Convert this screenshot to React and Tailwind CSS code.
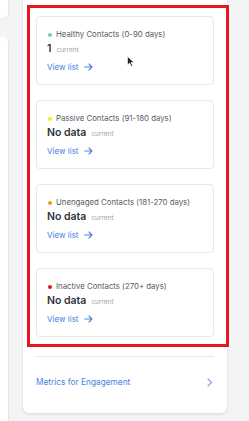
import React from 'react';

const groups = [
  { label: 'Healthy Contacts (0-90 days)', value: '1', dot: 'bg-[#6fd0a8]' },
  { label: 'Passive Contacts (91-180 days)', value: 'No data', dot: 'bg-[#f2ef14]' },
  { label: 'Unengaged Contacts (181-270 days)', value: 'No data', dot: 'bg-[#f5971c]' },
  { label: 'Inactive Contacts (270+ days)', value: 'No data', dot: 'bg-[#e3151f]' },
];

const ContactCard = ({ label, value, dot }) => (
  <div className="h-[69px] rounded-[4px] border border-[#e6e8ec] bg-white pl-[10px] pt-[13px]">
    <div className="flex items-center h-[9px]">
      <span className={`w-[4px] h-[4px] rounded-full ${dot} ml-[1px]`} />
      <span className="ml-[4px] text-[7.8px] text-[#555c68] whitespace-nowrap">{label}</span>
    </div>
    <div className="flex items-baseline mt-[2px] h-[14px]">
      <span className="text-[10.5px] font-semibold text-[#30343b]">{value}</span>
      <span className="ml-[5px] text-[6.5px] text-[#9aa0a8]">current</span>
    </div>
    <div className="flex items-center mt-[6px] text-[8px] text-[#4a82e0]">
      <span>View list</span>
      <svg className="ml-[5px]" width="9" height="8" viewBox="0 0 9 8" fill="none" stroke="currentColor" strokeWidth="1.1" strokeLinecap="round" strokeLinejoin="round">
        <path d="M0.8 4h7.2M5 1l3 3-3 3" />
      </svg>
    </div>
  </div>
);

export default function App() {
  return (
    <div className="relative w-[249px] h-[421px] overflow-hidden bg-[#f3f4f6]" style={{ fontFamily: 'Inter, "Noto Sans", sans-serif' }}>
      <div className="flex h-full">
        <div className="w-[8px] flex flex-col">
          <div className="h-[17px] bg-white rounded-br-[4px] shadow-[1px_0_1px_rgba(0,0,0,0.06)]" />
          <div className="mt-[20px] flex-1 bg-white rounded-tr-[4px] shadow-[1px_0_1px_rgba(0,0,0,0.06)]" />
        </div>
        <div className="ml-[15px] w-[204px] self-start -mt-[10px] bg-white rounded-[6px] shadow-[0_1px_3px_rgba(0,0,0,0.12)] px-[13px] pt-[26px] pb-[16px]">
          <div className="flex flex-col gap-[15px]">
            {groups.map((g) => (
              <ContactCard key={g.label} {...g} />
            ))}
          </div>
          <div className="mt-[19px] border-t border-[#e6e8ec]" />
          <div className="flex items-center justify-between h-[30px] mt-[10px] text-[8.3px] text-[#4a82e0]">
            <span>Metrics for Engagement</span>
            <svg className="mr-[1px]" width="6" height="9" viewBox="0 0 6 9" fill="none" stroke="#7aa2e6" strokeWidth="1.1" strokeLinecap="round" strokeLinejoin="round">
              <path d="M1 1l3.5 3.5L1 8" />
            </svg>
          </div>
        </div>
      </div>

      <div className="absolute left-[27px] top-[5px] w-[202px] h-[342px] border-[3px] border-[#e5161f] pointer-events-none" />

      <svg className="absolute left-[127px] top-[56px]" width="8" height="11" viewBox="0 0 8 11">
        <path d="M0.5 0.5v8.5l2.2-2 1.6 3.4 1.3-.6-1.6-3.3h3z" fill="#222" stroke="#fff" strokeWidth="0.6" />
      </svg>
    </div>
  );
}
